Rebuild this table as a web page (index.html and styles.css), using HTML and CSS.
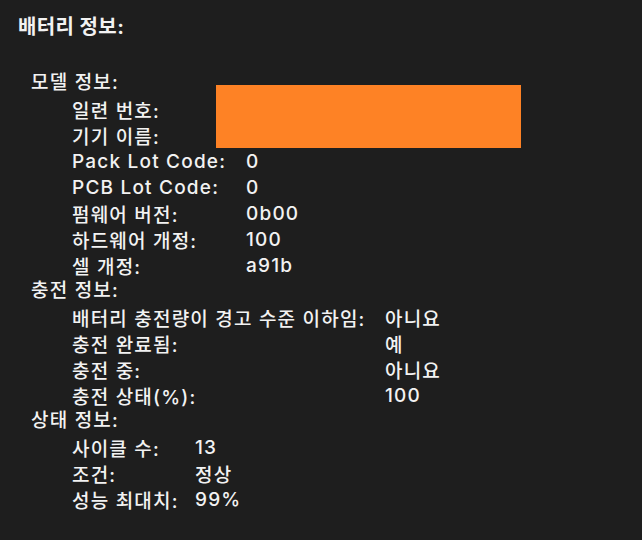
FILE: index.html
```html
<!DOCTYPE html>
<html lang="ko">
<head>
<meta charset="utf-8">
<link rel="stylesheet" href="styles.css">
</head>
<body>
<div class="panel">
  <h1 class="title">배터리 정보:</h1>

  <section class="group">
    <div class="group-title">모델 정보:</div>
    <div class="rows rows-model">
      <span class="k">일련 번호:</span><span class="v"></span>
      <span class="k">기기 이름:</span><span class="v"></span>
      <span class="k">Pack Lot Code:</span><span class="v">0</span>
      <span class="k">PCB Lot Code:</span><span class="v">0</span>
      <span class="k">펌웨어 버전:</span><span class="v">0b00</span>
      <span class="k">하드웨어 개정:</span><span class="v">100</span>
      <span class="k">셀 개정:</span><span class="v">a91b</span>
      <div class="redact"></div>
    </div>
  </section>

  <section class="group">
    <div class="group-title">충전 정보:</div>
    <div class="rows rows-charge">
      <span class="k">배터리 충전량이 경고 수준 이하임:</span><span class="v">아니요</span>
      <span class="k">충전 완료됨:</span><span class="v">예</span>
      <span class="k">충전 중:</span><span class="v">아니요</span>
      <span class="k">충전 상태(%):</span><span class="v">100</span>
    </div>
  </section>

  <section class="group">
    <div class="group-title">상태 정보:</div>
    <div class="rows rows-health">
      <span class="k">사이클 수:</span><span class="v">13</span>
      <span class="k">조건:</span><span class="v">정상</span>
      <span class="k">성능 최대치:</span><span class="v">99%</span>
    </div>
  </section>
</div>
</body>
</html>
```

FILE: styles.css
```css
html, body {
  margin: 0;
  padding: 0;
  background: #1e1e1e;
}

body {
  width: 642px;
  height: 540px;
  overflow: hidden;
  font-family: Inter, "Noto Sans CJK KR", sans-serif;
  color: #f2f2f2;
  font-size: 19px;
  font-weight: 500;
  letter-spacing: 1.2px;
}

.panel {
  padding: 14px 0 0 18px;
}

.title {
  margin: 0 0 30px 0;
  font-size: 20px;
  font-weight: 700;
  line-height: 26px;
  letter-spacing: 0.4px;
}

.group-title {
  margin-left: 13px;
  line-height: 26px;
}

.rows {
  position: relative;
  margin-left: 54px;
  display: grid;
  grid-auto-rows: 26px;
  align-items: center;
  white-space: nowrap;
}

.rows-model { grid-template-columns: 174px auto; }
.rows-charge { grid-template-columns: 313px auto; }
.rows-health { grid-template-columns: 123px auto; }

.redact {
  position: absolute;
  left: 144px;
  top: -11px;
  width: 305px;
  height: 63px;
  background: #fe8225;
}
```
